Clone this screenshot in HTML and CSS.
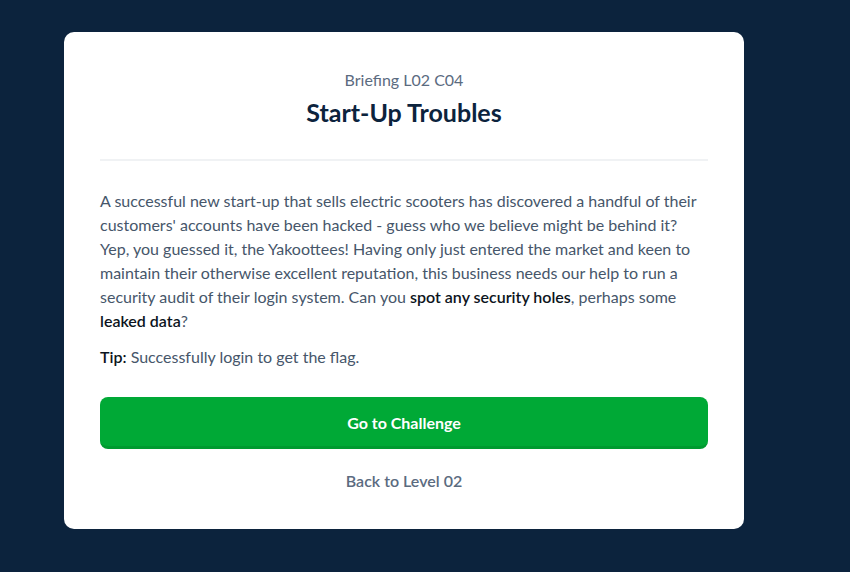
FILE: index.html
```html
<!DOCTYPE html>
<html>
<head>
<meta charset="utf-8">
<link rel="stylesheet" href="styles.css">
</head>
<body>
<div class="page">
  <div class="card">
    <div class="head">
      <div class="sub">Briefing L02 C04</div>
      <h1 class="title">Start-Up Troubles</h1>
    </div>
    <hr class="divider">
    <p class="body">A successful new start-up that sells electric scooters has discovered a handful of their customers' accounts have been hacked - guess who we believe might be behind it? Yep, you guessed it, the Yakoottees! Having only just entered the market and keen to maintain their otherwise excellent reputation, this business needs our help to run a security audit of their login system. Can you <b>spot any security holes</b>, perhaps some <b>leaked data</b>?</p>
    <p class="tip"><b>Tip:</b> Successfully login to get the flag.</p>
    <a class="btn">Go to Challenge</a>
    <a class="back">Back to Level 02</a>
  </div>
</div>
</body>
</html>
```
FILE: styles.css
```css
html, body {
  margin: 0;
  padding: 0;
  background: #0c233d;
}
body {
  font-family: Lato, "Noto Sans", sans-serif;
  width: 850px;
  height: 572px;
  overflow: hidden;
}
.page {
  padding: 32px 0 0 64px;
}
.card {
  box-sizing: border-box;
  width: 680px;
  height: 497px;
  background: #ffffff;
  border-radius: 10px;
  padding: 36px 36px 0 36px;
  display: flex;
  flex-direction: column;
}
.head {
  display: flex;
  flex-direction: column;
  align-items: center;
}
.sub {
  font-size: 16px;
  color: #5b6b7f;
  line-height: 24px;
}
.title {
  margin: 5px 0 0 0;
  font-size: 25px;
  font-weight: 700;
  color: #0c233d;
  line-height: 30px;
}
.divider {
  border: none;
  height: 2px;
  background: #f0f2f4;
  margin: 32px 0 0 0;
}
.body {
  margin: 28px 0 0 0;
  font-size: 16px;
  line-height: 24px;
  color: #46566a;
}
.body b, .tip b {
  font-weight: 600;
  color: #0c1420;
}
.tip {
  margin: 12px 0 0 0;
  font-size: 16px;
  line-height: 24px;
  color: #46566a;
}
.btn {
  margin-top: 28px;
  height: 52px;
  box-sizing: border-box;
  border-radius: 8px;
  background: #00a936;
  border-bottom: 3px solid #009a30;
  color: #ffffff;
  font-weight: 700;
  font-size: 16px;
  display: flex;
  align-items: center;
  justify-content: center;
  padding-top: 2px;
}
.back {
  margin-top: 20px;
  text-align: center;
  font-size: 16px;
  font-weight: 600;
  color: #5b6b7f;
  line-height: 24px;
}
```
